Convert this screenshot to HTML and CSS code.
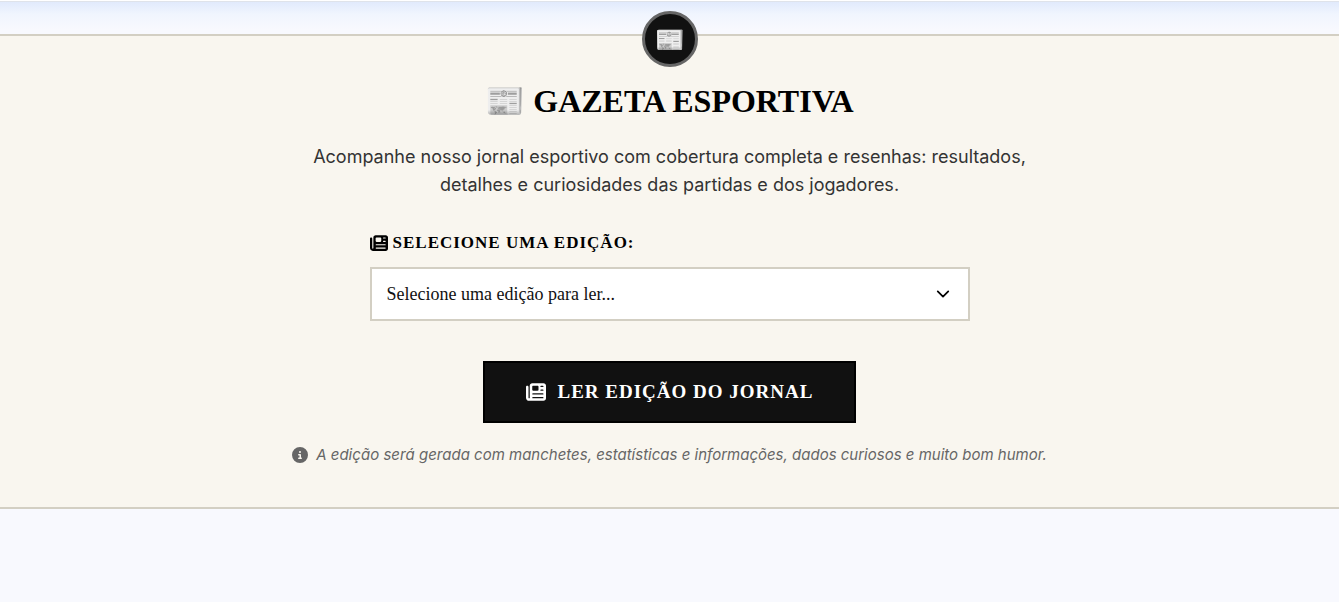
FILE: index.html
```
<!DOCTYPE html>
<html lang="pt-BR">
<head>
  <meta charset="UTF-8">
  <title>Gazeta Esportiva</title>
  <link rel="stylesheet" href="styles.css">
</head>
<body>
<section class="gazeta">
  <div class="selo">📰</div>
  <h2 class="titulo">📰 GAZETA ESPORTIVA</h2>
  <p class="descricao">Acompanhe nosso jornal esportivo com cobertura completa e resenhas: resultados, detalhes e curiosidades das partidas e dos jogadores.</p>
  <form class="seletor">
    <label for="edicao">
      <svg class="icone" viewBox="0 0 512 512"><path d="M96 96c0-35.300 28.700-64 64-64H448c35.300 0 64 28.700 64 64V416c0 35.300-28.700 64-64 64H80c-44.200 0-80-35.800-80-80V128c0-17.700 14.300-32 32-32s32 14.300 32 32V400c0 8.800 7.200 16 16 16s16-7.200 16-16V96zm64 24v80c0 13.300 10.700 24 24 24H296c13.300 0 24-10.700 24-24V120c0-13.300-10.700-24-24-24H184c-13.300 0-24 10.700-24 24zm208-8c0 8.800 7.200 16 16 16h48c8.800 0 16-7.200 16-16s-7.200-16-16-16H384c-8.800 0-16 7.200-16 16zm0 96c0 8.800 7.200 16 16 16h48c8.800 0 16-7.200 16-16s-7.200-16-16-16H384c-8.800 0-16 7.200-16 16zM160 304c0 8.800 7.200 16 16 16H432c8.800 0 16-7.200 16-16s-7.200-16-16-16H176c-8.800 0-16 7.200-16 16zm0 96c0 8.800 7.200 16 16 16H432c8.800 0 16-7.200 16-16s-7.200-16-16-16H176c-8.800 0-16 7.200-16 16z"/></svg>
      SELECIONE UMA EDIÇÃO:
    </label>
    <select id="edicao">
      <option>Selecione uma edição para ler...</option>
    </select>
  </form>
  <button class="ler" type="button">
    <svg class="icone" viewBox="0 0 512 512"><path d="M96 96c0-35.300 28.700-64 64-64H448c35.300 0 64 28.700 64 64V416c0 35.300-28.700 64-64 64H80c-44.200 0-80-35.800-80-80V128c0-17.700 14.300-32 32-32s32 14.300 32 32V400c0 8.800 7.200 16 16 16s16-7.200 16-16V96zm64 24v80c0 13.300 10.700 24 24 24H296c13.300 0 24-10.700 24-24V120c0-13.300-10.700-24-24-24H184c-13.300 0-24 10.700-24 24zm208-8c0 8.800 7.200 16 16 16h48c8.800 0 16-7.200 16-16s-7.200-16-16-16H384c-8.800 0-16 7.200-16 16zm0 96c0 8.800 7.200 16 16 16h48c8.800 0 16-7.200 16-16s-7.200-16-16-16H384c-8.800 0-16 7.200-16 16zM160 304c0 8.800 7.200 16 16 16H432c8.800 0 16-7.200 16-16s-7.200-16-16-16H176c-8.800 0-16 7.200-16 16zm0 96c0 8.800 7.200 16 16 16H432c8.800 0 16-7.200 16-16s-7.200-16-16-16H176c-8.800 0-16 7.200-16 16z"/></svg>
    LER EDIÇÃO DO JORNAL
  </button>
  <p class="nota">
    <svg class="icone" viewBox="0 0 512 512"><path d="M256 512A256 256 0 1 0 256 0a256 256 0 1 0 0 512zM216 336h24V272H216c-13.300 0-24-10.700-24-24s10.700-24 24-24h48c13.300 0 24 10.700 24 24v88h8c13.300 0 24 10.700 24 24s-10.700 24-24 24H216c-13.300 0-24-10.700-24-24s10.700-24 24-24zm40-208a32 32 0 1 1 0 64 32 32 0 1 1 0-64z"/></svg>
    A edição será gerada com manchetes, estatísticas e informações, dados curiosos e muito bom humor.
  </p>
</section>
</body>
</html>
```
FILE: styles.css
```
* {
  box-sizing: border-box;
}

body {
  margin: 0;
  min-height: 100vh;
  padding-top: 34px;
  background: linear-gradient(#ffffff 1px, #dfe3ea 1px, #dfe3ea 2px, #e1eafc 2px, #f0f5fe 14px, #f8f9fe 30px) no-repeat #f8f9fe;
  font-family: Inter, sans-serif;
}

.gazeta {
  position: relative;
  display: flex;
  flex-direction: column;
  align-items: center;
  padding: 40px 32px;
  background: #f9f6ef;
  border-top: 2px solid #d3cfc3;
  border-bottom: 2px solid #d3cfc3;
}

/* selo sobre a borda superior */
.selo {
  position: absolute;
  top: -25px;
  left: 50%;
  transform: translateX(-50%);
  display: flex;
  align-items: center;
  justify-content: center;
  width: 56px;
  height: 56px;
  border: 3px solid #666666;
  border-radius: 50%;
  background: #111111;
  font-size: 24px;
}

.titulo {
  margin: 7px 0 24px;
  font-family: "Liberation Serif", serif;
  font-size: 32px;
  line-height: 36px;
  color: #000000;
}

.descricao {
  max-width: 720px;
  margin: 0 0 30px;
  font-size: 18px;
  line-height: 28px;
  text-align: center;
  color: #333333;
}

.icone {
  width: 1em;
  height: 1em;
  fill: currentColor;
}

.seletor {
  width: 100%;
  max-width: 600px;
  margin-bottom: 40px;
}

.seletor label {
  display: flex;
  align-items: center;
  gap: 5px;
  margin-bottom: 10px;
  font-family: "Liberation Serif", serif;
  font-size: 17px;
  font-weight: bold;
  line-height: 28px;
  letter-spacing: 1px;
}

.seletor label .icone {
  width: 18px;
  height: 18px;
}

.seletor select {
  display: block;
  width: 100%;
  height: 54px;
  padding: 0 15px;
  appearance: none;
  border: 2px solid #d3cfc3;
  border-radius: 0;
  background: #ffffff url("data:image/svg+xml,%3Csvg xmlns='http://www.w3.org/2000/svg' viewBox='0 0 16 16'%3E%3Cpath fill='none' stroke='black' stroke-width='2' stroke-linecap='round' stroke-linejoin='round' d='m2 5 6 6 6-6'/%3E%3C/svg%3E") no-repeat right 18px center / 14px;
  color: #111111;
  font-family: "Liberation Serif", serif;
  font-size: 18px;
}

.ler {
  display: flex;
  align-items: center;
  gap: 12px;
  height: 62px;
  padding: 0 41px;
  border: 2px solid #000000;
  background: #111111;
  color: #ffffff;
  font-family: "Liberation Serif", serif;
  font-size: 19px;
  font-weight: bold;
  letter-spacing: 1px;
}

.ler .icone {
  width: 20px;
  height: 20px;
}

.nota {
  display: flex;
  align-items: center;
  gap: 8px;
  margin: 20px 0 0;
  font-size: 15px;
  font-style: italic;
  line-height: 24px;
  color: #666666;
}

.nota .icone {
  width: 16px;
  height: 16px;
}
```
